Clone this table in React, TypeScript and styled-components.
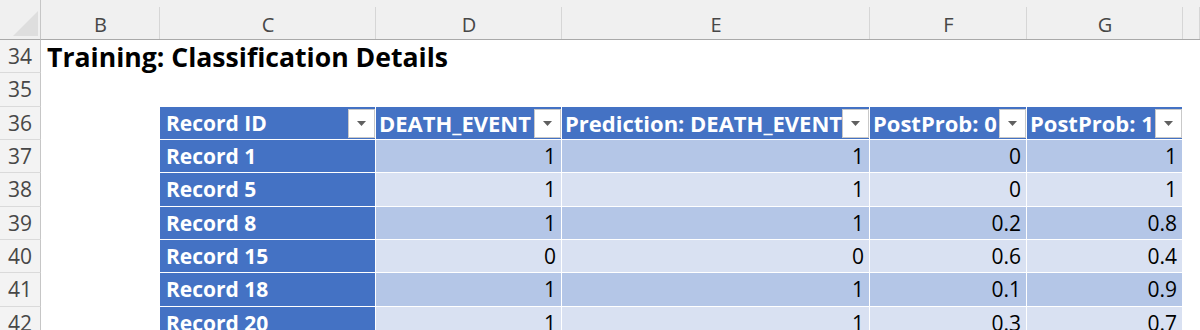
import React from 'react';
import styled, { createGlobalStyle } from 'styled-components';

const GlobalStyle = createGlobalStyle`
  html, body {
    margin: 0;
    padding: 0;
    background: #ffffff;
    overflow: hidden;
  }
  body {
    font-family: 'Open Sans', 'Liberation Sans', sans-serif;
  }
`;

const COLS = ['B', 'C', 'D', 'E', 'F', 'G', ''];
const ROW_H = 33.333;

const Sheet = styled.div`
  display: grid;
  grid-template-columns: 41px 119px 216px 186px 308px 157px 156px 1fr;
  grid-template-rows: 40px repeat(9, ${ROW_H}px);
  width: 1200px;
  height: 330px;
  overflow: hidden;
  background: #ffffff;
`;

const Corner = styled.div`
  background: #f0f0f0;
  border-right: 1px solid #c6c6c6;
  border-bottom: 1px solid #a9a9a9;
  box-sizing: border-box;
  display: flex;
  align-items: flex-end;
  justify-content: flex-end;
  padding: 0 2px 3px 0;
`;

const ColumnHead = styled.div`
  background:
    linear-gradient(#d6d6d6, #d6d6d6) right 0 bottom 0 / 1px 32px no-repeat,
    #f0f0f0;
  border-bottom: 1px solid #a9a9a9;
  box-sizing: border-box;
  display: flex;
  align-items: center;
  justify-content: center;
  padding-top: 10px;
  font-size: 20px;
  color: #474747;
`;

const RowHead = styled.div`
  background: #f3f3f3;
  border-right: 1px solid #c6c6c6;
  border-bottom: 1px solid #dadada;
  box-sizing: border-box;
  display: flex;
  align-items: center;
  justify-content: center;
  font-size: 21px;
  color: #474747;
`;

const Blank = styled.div``;

const Title = styled.div`
  grid-column: 2 / -1;
  display: flex;
  align-items: center;
  padding-left: 6px;
  font-size: 26.6px;
  font-weight: 700;
  color: #000000;
  white-space: nowrap;
`;

const Cell = styled.div<{ $bg: string; $head?: boolean }>`
  background: ${({ $bg }) => $bg};
  border-right: 1px solid #ffffff;
  border-bottom: 1px solid #ffffff;
  box-sizing: border-box;
  display: flex;
  align-items: center;
  min-width: 0;
  overflow: hidden;
  font-size: 21px;
  font-weight: ${({ $head }) => ($head ? 700 : 400)};
  color: ${({ $head }) => ($head ? '#ffffff' : '#000000')};
  white-space: nowrap;
`;

const Label = styled.span<{ $inset?: number; $size?: number }>`
  flex: 1;
  min-width: 0;
  overflow: hidden;
  padding-left: ${({ $inset }) => $inset ?? 3}px;
  font-size: ${({ $size }) => $size ?? 21}px;
`;

const Value = styled.span`
  flex: 1;
  text-align: right;
  padding-right: 5px;
`;

const Filter = styled.span`
  flex: none;
  width: 27px;
  height: 29px;
  margin-top: 2px;
  background: #ffffff;
  border: 1px solid #c9c9c9;
  box-sizing: border-box;
  display: flex;
  align-items: center;
  justify-content: center;
`;

const Arrow = () => (
  <svg width="9" height="5" viewBox="0 0 9 5">
    <polygon points="0,0 9,0 4.5,5" fill="#606060" />
  </svg>
);

const HEAD_BLUE = '#4472c4';
const BAND_DARK = '#b4c6e7';
const BAND_LIGHT = '#d9e1f2';

const headers = ['Record ID', 'DEATH_EVENT', 'Prediction: DEATH_EVENT', 'PostProb: 0', 'PostProb: 1'];

const records: [string, number, number, number, number][] = [
  ['Record 1', 1, 1, 0, 1],
  ['Record 5', 1, 1, 0, 1],
  ['Record 8', 1, 1, 0.2, 0.8],
  ['Record 15', 0, 0, 0.6, 0.4],
  ['Record 18', 1, 1, 0.1, 0.9],
  ['Record 20', 1, 1, 0.3, 0.7],
];

export default function App() {
  return (
    <>
      <GlobalStyle />
      <Sheet>
        <Corner>
          <svg width="25" height="25" viewBox="0 0 25 25">
            <polygon points="25,0 25,25 0,25" fill="#dedede" />
          </svg>
        </Corner>
        {COLS.map((c, i) => (
          <ColumnHead key={i}>{c}</ColumnHead>
        ))}

        <RowHead>34</RowHead>
        <Title>Training: Classification Details</Title>

        <RowHead>35</RowHead>
        {COLS.map((_, i) => (
          <Blank key={i} />
        ))}

        <RowHead>36</RowHead>
        <Blank />
        {headers.map((h, i) => (
          <Cell key={h} $bg={HEAD_BLUE} $head>
            <Label $inset={i === 0 ? 6 : 3} $size={i === 0 ? 21 : 22}>
              {h}
            </Label>
            <Filter>
              <Arrow />
            </Filter>
          </Cell>
        ))}
        <Blank />

        {records.map(([id, ...vals], r) => (
          <React.Fragment key={id}>
            <RowHead>{37 + r}</RowHead>
            <Blank />
            <Cell $bg={HEAD_BLUE} $head>
              <Label $inset={6}>{id}</Label>
            </Cell>
            {vals.map((v, i) => (
              <Cell key={i} $bg={r % 2 === 0 ? BAND_DARK : BAND_LIGHT}>
                <Value>{v}</Value>
              </Cell>
            ))}
            <Blank />
          </React.Fragment>
        ))}
      </Sheet>
    </>
  );
}
